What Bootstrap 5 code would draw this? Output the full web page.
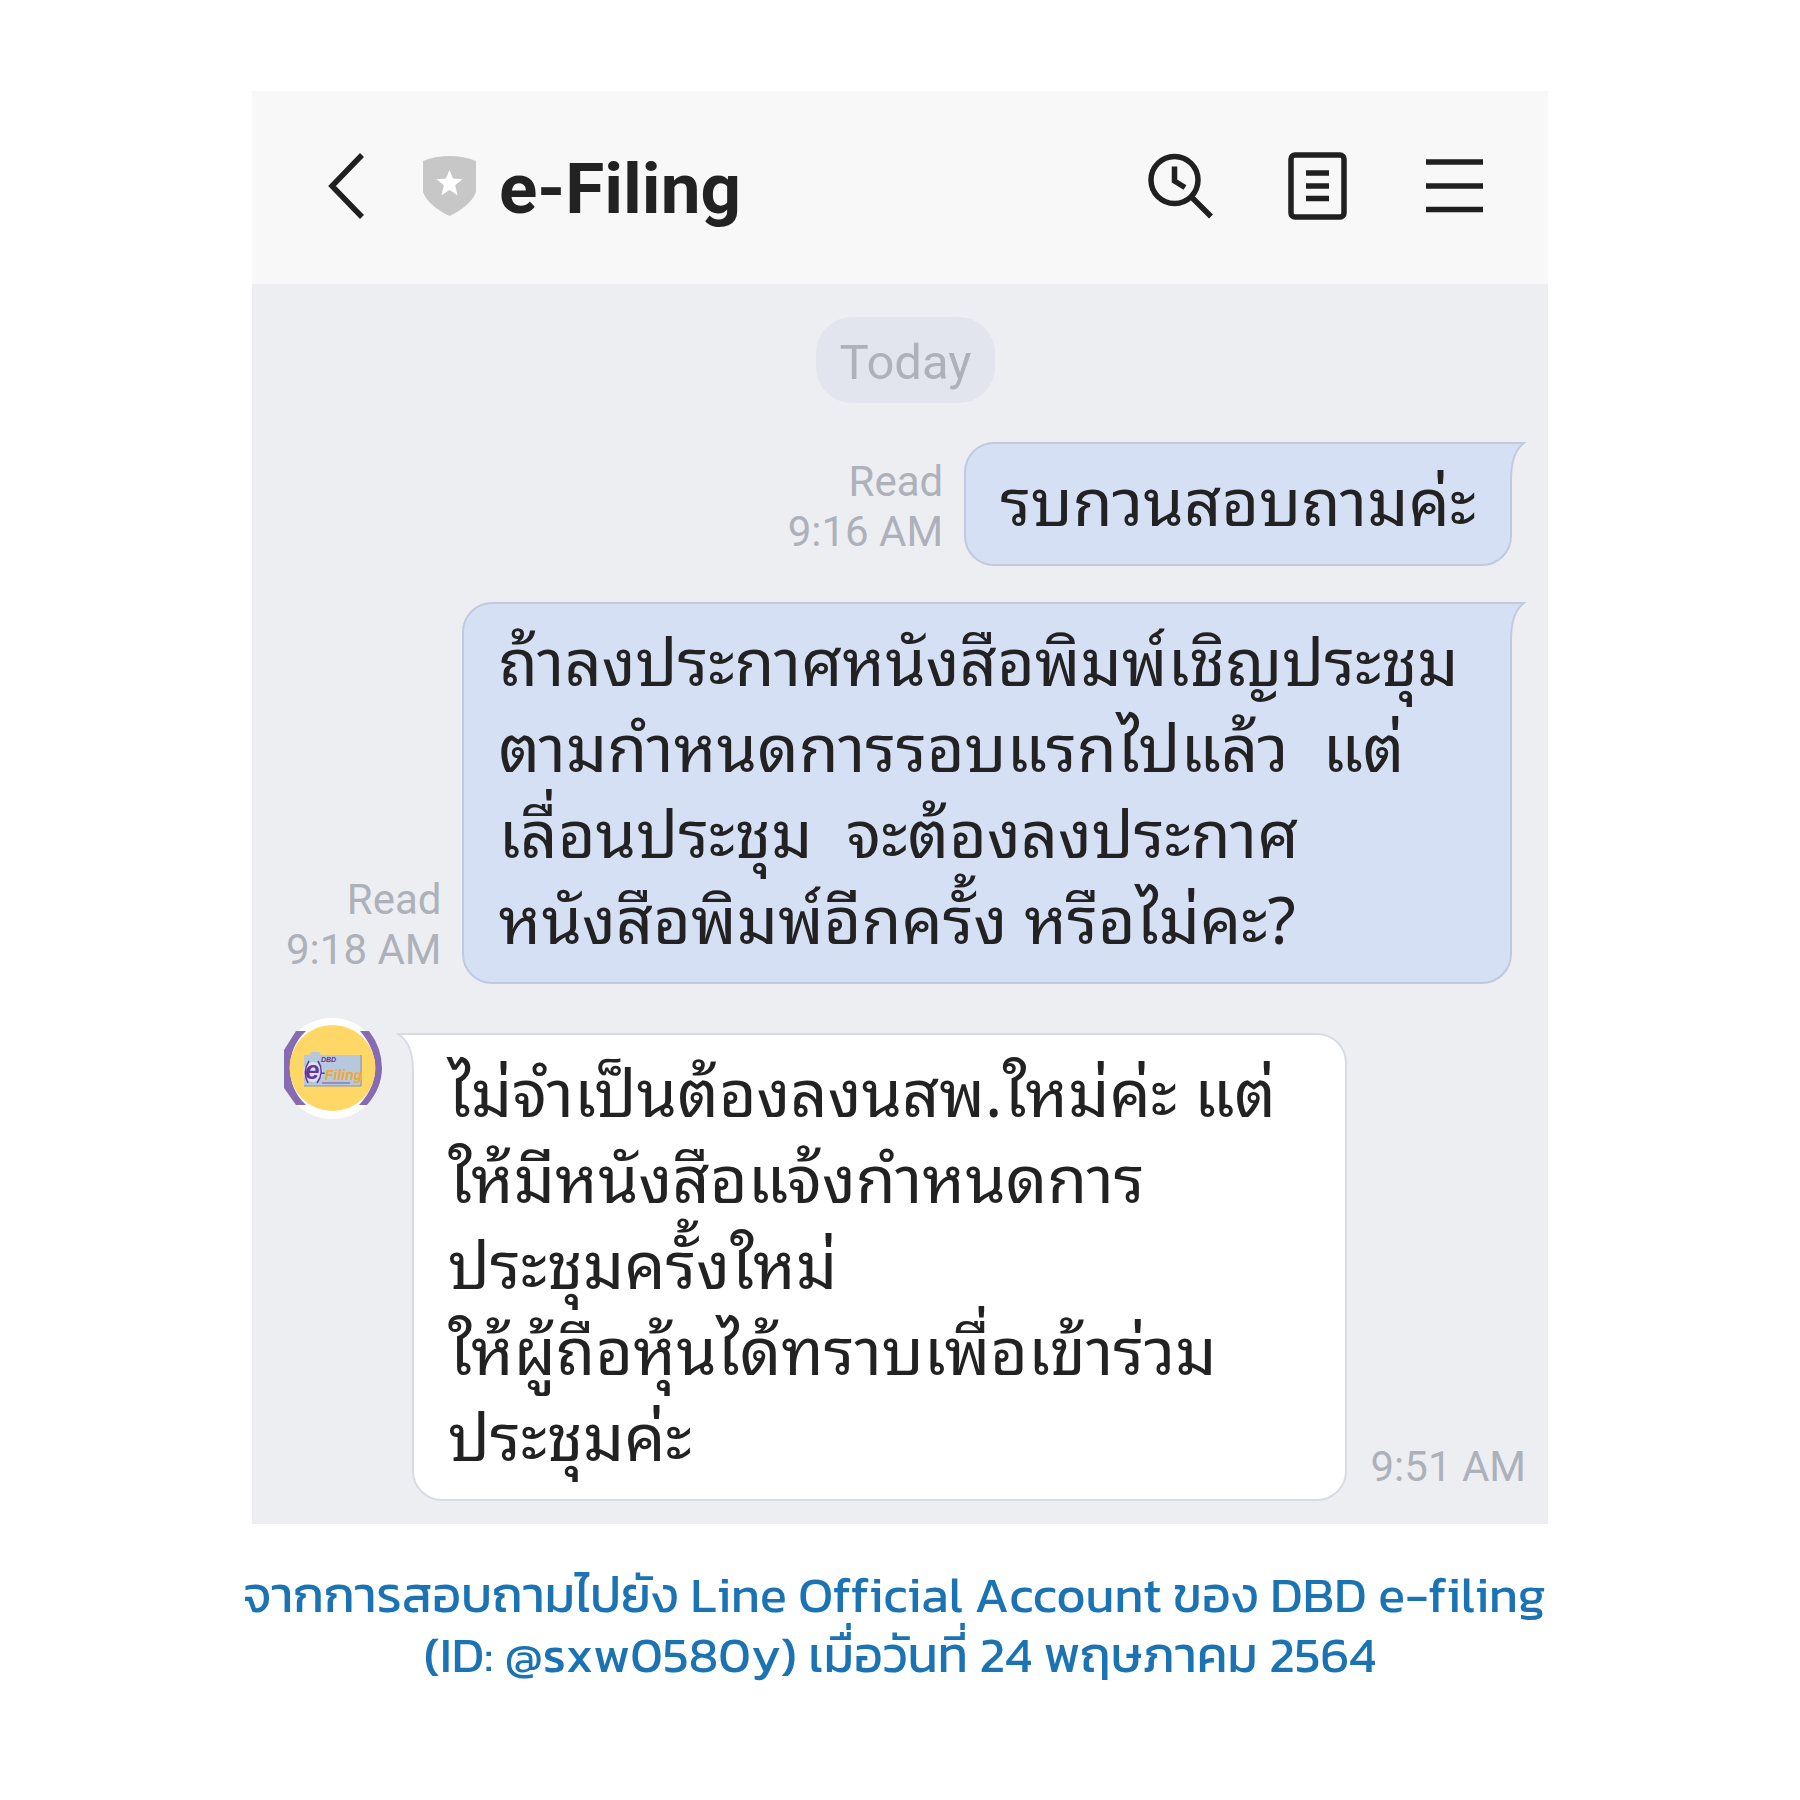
<!DOCTYPE html>
<html lang="th">
<head>
<meta charset="utf-8">
<meta name="viewport" content="width=device-width, initial-scale=1">
<title>e-Filing</title>
<link href="https://cdn.jsdelivr.net/npm/bootstrap@5.3.0/dist/css/bootstrap.min.css" rel="stylesheet">
<style>
body { background: #fff; color: #222; font-family: Roboto, "Noto Sans Thai", "Noto Sans", sans-serif; }
.phone { width: 72%; margin-top: 91px; background: #edeef2; }
.chat-head { background: #f8f8f8; padding: 54px 65px 58px 76px; min-height: 193px; }
.chat-head h1 { font-size: 71px; line-height: 74px; font-weight: 700; margin-left: 23px; padding-top: 7px; }
.icon-btn { background: none; border: 0; padding: 0; display: block; color: #202020; }
.icon-btn svg, .shield { display: block; }
.shield { margin-left: 59px; }
.tools { gap: 75px; }
.chat-body { padding: 33px 36px 23px 32px; }
.day { background: #e2e5ed; color: #adb1ba; font-size: 49px; line-height: 80px; padding: 6px 24px 0; border-radius: 36px; margin-left: 15px; }
.msg { gap: 19px; }
.msg-a { margin-top: 39px; }
.msg-b { margin-top: 36px; }
.msg-c { margin-top: 49px; margin-right: -16px; gap: 22px; }
.stamp { color: #adb1ba; font-size: 42px; line-height: 50px; padding: 0 2px 9px; white-space: nowrap; }
.bubble { position: relative; border: 2px solid #c0cade; border-radius: 30px; background: #d6e0f4; padding: 10px 34px 24px; font-family: "Noto Sans Thai Looped", "Noto Looped Thai", Loma, Umpush, "Noto Sans Thai", "Noto Sans", sans-serif; font-size: 65px; line-height: 86px; white-space: nowrap; }
.bubble p { margin: 0; }
.sent { border-top-right-radius: 0; }
.got { border-color: #d8dbe4; background: #fff; border-top-left-radius: 0; }
.tail { position: absolute; top: -2px; }
.sent .tail { right: -16px; }
.got .tail { left: -18px; }
.face { margin-top: -15px; margin-right: 8px; }
.note { color: #1c73b3; font-family: Kanit, "Noto Sans Thai", "Noto Sans", sans-serif; font-size: 50px; line-height: 60px; font-weight: 400; font-kerning: none; font-feature-settings: "liga" 0, "clig" 0; margin-top: 41px; margin-bottom: 0; }
</style>
</head>
<body>
<main class="phone mx-auto">
  <header class="chat-head d-flex align-items-center">
    <button class="icon-btn" type="button" aria-label="Back"><svg width="36" height="66" viewBox="0 0 36 66" fill="none" stroke="currentColor" stroke-width="5.500"><path d="M34 2 4 33l30 31"/></svg></button>
    <svg class="shield" width="53" height="60" viewBox="0 0 53 60" aria-hidden="true"><path d="M0 5Q12 0 26.500 0T53 5V36C49 47 37 55 26.500 60 16 55 4 47 0 36z" fill="#c7c7c7"/><path d="m26.500 14 3.500 8.500 9.500.7-7.300 6 2.300 10-8-5.200-8 5.200 2.300-10-7.300-6 9.500-.7z" fill="#fff"/></svg>
    <h1 class="mb-0">e-Filing</h1>
    <div class="tools d-flex align-items-center ms-auto">
      <button class="icon-btn" type="button" aria-label="Search"><svg width="65" height="66" viewBox="0 0 65 66" fill="none" stroke="currentColor" stroke-width="5.500"><circle cx="26.500" cy="27" r="23.500"/><path d="M26.500 13.500V28l10.500 6.500M43.500 44 63 63.500"/></svg></button>
      <button class="icon-btn" type="button" aria-label="Notes"><svg width="59" height="68" viewBox="0 0 59 68" fill="none" stroke="currentColor" stroke-width="5.500"><rect x="3" y="3" width="53" height="62" rx="4"/><path d="M18 21h23M18 34h23M18 46.500h23"/></svg></button>
      <button class="icon-btn ms-1" type="button" aria-label="Menu"><svg width="57" height="54" viewBox="0 0 57 54" stroke="currentColor" stroke-width="5.500"><path d="M0 3h57M0 27h57M0 50.500h57"/></svg></button>
    </div>
  </header>
  <section class="chat-body">
    <div class="text-center"><span class="day d-inline-block">Today</span></div>
    <div class="msg msg-a d-flex justify-content-end align-items-end">
      <div class="stamp text-end">Read<br>9:16 AM</div>
      <div class="bubble sent"><p>รบกวนสอบถามค่ะ</p>
        <svg class="tail" width="18" height="38" viewBox="0 0 18 38"><path d="M0 1H16Q3 10 3 38H0z" fill="#d6e0f4"/><path d="M0 1H16Q3 10 3 38" fill="none" stroke="#c0cade" stroke-width="2"/></svg></div>
    </div>
    <div class="msg msg-b d-flex justify-content-end align-items-end">
      <div class="stamp text-end">Read<br>9:18 AM</div>
      <div class="bubble sent flex-grow-1"><p>ถ้าลงประกาศหนังสือพิมพ์เชิญประชุม<br>ตามกำหนดการรอบแรกไปแล้ว&nbsp; แต่<br>เลื่อนประชุม&nbsp; จะต้องลงประกาศ<br>หนังสือพิมพ์อีกครั้ง หรือไม่คะ?</p>
        <svg class="tail" width="18" height="38" viewBox="0 0 18 38"><path d="M0 1H16Q3 10 3 38H0z" fill="#d6e0f4"/><path d="M0 1H16Q3 10 3 38" fill="none" stroke="#c0cade" stroke-width="2"/></svg></div>
    </div>
    <div class="msg msg-c d-flex align-items-end">
      <svg class="face flex-shrink-0 align-self-start" width="98" height="101" viewBox="0 0 98 101" role="img" aria-label="DBD e-Filing"><circle cx="48" cy="50.500" r="50.500" fill="#fff"/><path d="M12 13H22Q6 28 6 50T22 87H12L0 70V32zM76 13h9Q98 30 98 50T83 87H75Q91 70 91 50T76 13z" fill="#866bb3"/><circle cx="48.500" cy="50" r="43" fill="#fed766"/><path d="M20 37h5l2-3h8l2 3h41v31H20z" fill="#b7c8dc"/><path d="M77 37v31H20" fill="none" stroke="#8795ad"/><circle cx="29" cy="54" r="10" fill="#dbe3f0"/><path d="M25 43q-7 11-1 22M34 43q7 11-1 22" fill="none" stroke="#65379b" stroke-width="1.500"/><g font-family="Liberation Sans" font-weight="700" font-style="italic"><text x="37" y="44" font-size="7" fill="#703092">DBD</text><text x="21" y="61" font-size="26" fill="#65379b">e</text><text x="37" y="59" font-size="12" fill="#65379b">-</text><text x="41" y="62" font-size="14" fill="#f3a72d">Filing</text></g><path d="M38 65h28" stroke="#765297"/></svg>
      <div class="bubble got flex-grow-1"><p>ไม่จำเป็นต้องลงนสพ.ใหม่ค่ะ แต่<br>ให้มีหนังสือแจ้งกำหนดการ<br>ประชุมครั้งใหม่<br>ให้ผู้ถือหุ้นได้ทราบเพื่อเข้าร่วม<br>ประชุมค่ะ</p>
        <svg class="tail" width="20" height="38" viewBox="0 0 20 38"><path d="M20 1H2Q17 10 17 38H20z" fill="#fff"/><path d="M20 1H2Q17 10 17 38" fill="none" stroke="#d8dbe4" stroke-width="2"/></svg></div>
      <div class="stamp">9:51 AM</div>
    </div>
  </section>
</main>
<p class="note text-center">จากการสอบถามไปยัง Line Official Account ของ DBD e-filing&nbsp;<br>(ID: @sxw0580y) เมื่อวันที่ 24 พฤษภาคม 2564</p>
<script src="https://cdn.jsdelivr.net/npm/bootstrap@5.3.0/dist/js/bootstrap.bundle.min.js"></script>
</body>
</html>
